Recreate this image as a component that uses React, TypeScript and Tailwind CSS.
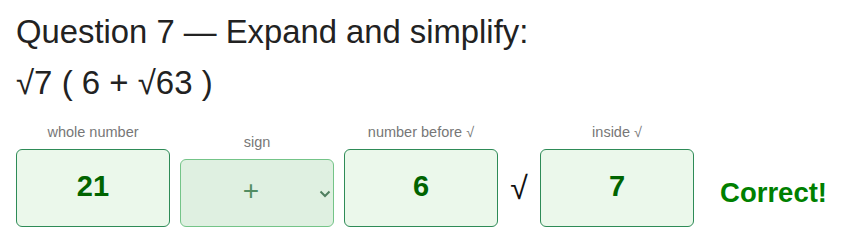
import React from "react";

type BoxProps = {
  label: string;
  value: string;
};

const AnswerBox = ({ label, value }: BoxProps) => {
  return (
    <div className="flex flex-col items-center">
      <span className="mb-[9px] text-[14.5px] leading-none text-[#777]">{label}</span>
      <div className="flex h-[78px] w-[154px] items-center justify-center rounded-md border border-[#2e8b57] bg-[#ebf8eb] pb-[2px] text-[29px] font-bold text-[#006400]">
        {value}
      </div>
    </div>
  );
};

const App = () => {
  return (
    <div
      className="bg-white px-4 pt-[13px] text-[#222]"
      style={{ fontFamily: '"Liberation Sans", Arial, sans-serif' }}
    >
      <h2 className="text-[32.8px] leading-[38px]">Question 7 — Expand and simplify:</h2>
      <p className="mt-[13px] text-[33px] leading-[38px]">√7 ( 6 + √63 )</p>

      <div className="mt-[23px] flex items-end gap-[10px]">
        <AnswerBox label="whole number" value="21" />

        <div className="flex flex-col items-center">
          <span className="mb-[9px] text-[14.5px] leading-none text-[#777]">sign</span>
          <div className="relative h-[68px] w-[154px]">
            <select
              disabled
              value="+"
              className="h-full w-full appearance-none rounded-md border border-[#74c488] bg-[#dff0e1] pb-[3px] pr-3 text-center text-[28px] text-[#528d62]"
            >
              <option value="+">+</option>
              <option value="-">−</option>
            </select>
            <svg
              className="pointer-events-none absolute right-[3px] top-[31px]"
              width="12"
              height="8"
              viewBox="0 0 12 8"
              fill="none"
            >
              <path d="M1.5 1.5 L6 6 L10.5 1.5" stroke="#4f7f5f" strokeWidth="2" />
            </svg>
          </div>
        </div>

        <AnswerBox label="number before √" value="6" />

        <div className="flex h-[78px] w-[33px] items-center justify-center text-[32px] text-[#111]">√</div>

        <AnswerBox label="inside √" value="7" />

        <div className="ml-[16px] flex h-[78px] items-center pt-[10px] text-[27.5px] font-bold text-[#008000]">
          Correct!
        </div>
      </div>
    </div>
  );
};

export default App;
